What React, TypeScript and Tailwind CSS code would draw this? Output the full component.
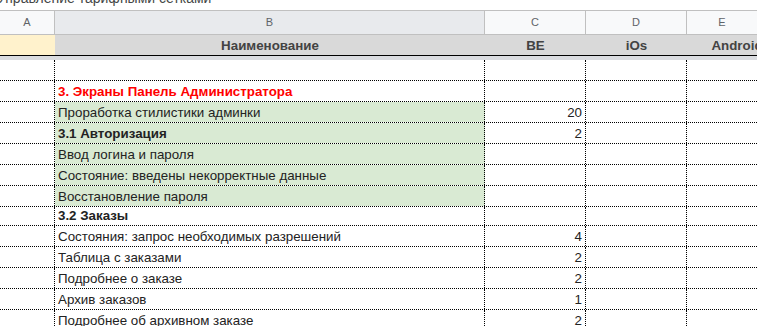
import React from "react";

type Row = {
  name: string;
  be?: string;
  kind?: "title" | "bold" | "plain";
  green?: boolean;
  h?: number;
};

const rows: Row[] = [
  { name: "" },
  { name: "3. Экраны Панель Администратора", kind: "title" },
  { name: "Проработка стилистики админки", be: "20", green: true },
  { name: "3.1 Авторизация", be: "2", kind: "bold", green: true },
  { name: "Ввод логина и пароля", green: true },
  { name: "Состояние: введены некорректные данные", green: true },
  { name: "Восстановление пароля", green: true },
  { name: "3.2 Заказы", kind: "bold", h: 19 },
  { name: "Состояния: запрос необходимых разрешений", be: "4" },
  { name: "Таблица с заказами", be: "2" },
  { name: "Подробнее о заказе", be: "2" },
  { name: "Архив заказов", be: "1" },
  { name: "Подробнее об архивном заказе", be: "2" },
];

const font = { fontFamily: '"Liberation Sans", Arial, sans-serif' };

function DataRow({ r }: { r: Row }) {
  const h = r.h ?? 21;
  const nameCls =
    r.kind === "title"
      ? "font-bold text-[#ff0000]"
      : r.kind === "bold"
      ? "font-bold text-[#222222]"
      : "text-[#222222]";
  return (
    <div
      className="flex border-b border-dotted border-black text-[13.33px] leading-[15px]"
      style={{ height: h }}
    >
      <div className="w-[55px] shrink-0 border-r border-dotted border-black" />
      <div
        className={`w-[430px] shrink-0 border-r border-dotted border-black flex items-end pb-[2px] pl-[3px] whitespace-nowrap overflow-hidden ${
          r.green ? "bg-[#d9ead3]" : ""
        } ${nameCls}`}
      >
        {r.name}
      </div>
      <div className="w-[101px] shrink-0 border-r border-dotted border-black flex items-end justify-end pb-[2px] pr-[3px] text-[#222222]">
        {r.be}
      </div>
      <div className="w-[101px] shrink-0 border-r border-dotted border-black" />
      <div className="flex-1" />
    </div>
  );
}

export default function App() {
  return (
    <div className="w-[757px] h-[326px] overflow-hidden bg-white" style={font}>
      {/* sheet title, scrolled mostly out of view */}
      <div className="h-[10px] overflow-hidden relative">
        <div className="absolute left-[-3px] top-[-10px] text-[14px] leading-[16px] text-[#444746] whitespace-nowrap">
          Управление тарифными сетками
        </div>
      </div>

      {/* column letters */}
      <div className="flex h-[25px] border-y border-[#c0c0c0] text-[11px] text-[#5f6368]">
        <div className="w-[55px] shrink-0 border-r border-[#c0c0c0] bg-[#f8f9fa] flex items-center justify-center">
          A
        </div>
        <div className="w-[430px] shrink-0 border-r border-[#c0c0c0] bg-[#e8eaed] flex items-center justify-center">
          B
        </div>
        <div className="w-[101px] shrink-0 border-r border-[#c0c0c0] bg-[#f8f9fa] flex items-center justify-center">
          C
        </div>
        <div className="w-[101px] shrink-0 border-r border-[#c0c0c0] bg-[#f8f9fa] flex items-center justify-center">
          D
        </div>
        <div className="flex-1 bg-[#f8f9fa] flex items-center justify-center">E</div>
      </div>

      {/* frozen header row */}
      <div className="flex h-[21px] border-b border-black text-[13.33px] leading-[15px] font-bold text-[#434343]">
        <div className="w-[55px] shrink-0 bg-[#fff2cc]" />
        <div className="w-[430px] shrink-0 bg-[#d9d9d9] flex items-end justify-center pb-[2px]">
          Наименование
        </div>
        <div className="w-[101px] shrink-0 bg-[#d9d9d9] flex items-end justify-center pb-[2px]">
          BE
        </div>
        <div className="w-[101px] shrink-0 bg-[#d9d9d9] flex items-end justify-center pb-[2px]">
          iOs
        </div>
        <div className="flex-1 bg-[#d9d9d9] flex items-end justify-center pb-[2px] whitespace-nowrap overflow-hidden">
          <span className="pl-[30px]">Android</span>
        </div>
      </div>

      {/* freeze bar */}
      <div className="h-[4px] bg-[#dadce0]" />

      {rows.map((r, i) => (
        <DataRow key={i} r={r} />
      ))}
    </div>
  );
}
